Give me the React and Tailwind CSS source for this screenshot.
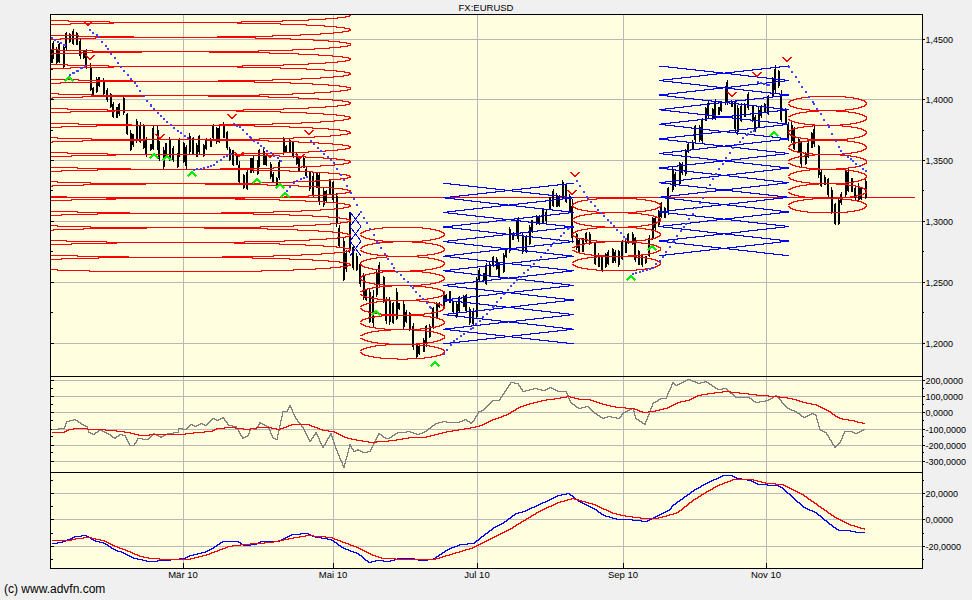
import React from 'react';

// [x, high, low] in page pixels, read off the chart
const BARS = [
  [51,49,63],[53,41,59],[56,47,65],[59,43,63],[63,44,68],[66,32,50],[69,33,43],[73,29,45],[76,32,45],[80,38,59],
  [83,50,59],[86,49,69],[90,63,91],[93,87,97],[96,77,93],[99,77,87],[103,78,95],[107,88,102],[110,93,108],[113,102,118],
  [116,107,118],[119,103,116],[123,95,115],[127,113,135],[130,130,151],[133,134,147],[136,119,143],[140,122,143],[143,124,149],[146,137,157],
  [150,144,151],[153,126,150],[157,126,150],[159,141,161],[163,147,169],[166,143,158],[169,137,161],[173,146,162],[177,153,168],[179,138,157],
  [183,142,163],[186,145,169],[189,133,154],[193,137,155],[196,143,157],[199,135,154],[203,144,157],[206,138,150],[210,138,147],[213,124,140],
  [216,127,144],[219,126,143],[223,122,138],[227,131,150],[229,147,161],[233,150,166],[236,153,165],[239,161,185],[243,174,189],[247,169,190],
  [250,158,173],[253,156,173],[257,160,175],[259,149,167],[263,149,165],[266,156,166],[270,162,179],[273,172,183],[276,177,187],[279,160,180],
  [283,137,155],[286,145,153],[289,138,153],[293,141,158],[296,152,165],[299,158,172],[303,157,168],[306,167,177],[309,171,191],[313,173,197],
  [316,172,188],[319,172,205],[323,188,207],[326,190,202],[329,179,195],[333,181,203],[336,193,227],[339,225,247],[343,238,281],[346,250,272],
  [349,212,253],[353,245,270],[356,253,271],[360,263,287],[363,273,300],[366,290,301],[369,289,323],[373,290,327],[376,270,297],[379,262,287],
  [383,276,303],[386,297,324],[389,297,325],[393,302,324],[396,288,320],[399,303,310],[403,301,330],[406,310,323],[409,312,331],[413,323,350],
  [416,343,358],[419,345,355],[423,338,352],[426,325,347],[429,324,338],[433,307,329],[436,302,318],[439,302,308],[443,292,308],[446,294,302],
  [449,291,303],[453,301,313],[456,302,318],[459,296,312],[463,295,307],[466,294,313],[469,307,325],[473,308,325],[476,277,318],[479,268,282],
  [483,273,282],[486,263,285],[489,262,277],[493,256,267],[496,257,270],[499,263,278],[503,253,273],[506,248,258],[509,227,253],[513,232,240],
  [516,220,235],[518,217,242],[522,233,254],[526,235,253],[529,225,245],[532,220,233],[536,215,225],[539,215,225],[542,208,223],[546,210,223],
  [549,197,210],[553,189,207],[556,193,207],[559,195,207],[562,180,200],[566,184,203],[569,194,213],[572,199,243],[576,233,250],[579,238,253],
  [582,238,252],[586,232,243],[589,232,245],[595,242,265],[598,253,267],[602,255,272],[605,253,268],[608,250,265],[612,248,263],[615,250,263],
  [618,250,267],[622,240,260],[625,240,253],[628,233,244],[632,232,245],[635,237,262],[638,250,265],[642,254,267],[645,256,264],[649,235,257],
  [652,217,240],[655,217,230],[658,210,227],[661,202,218],[664,207,218],[668,187,215],[672,167,192],[675,172,187],[679,162,185],[682,162,175],
  [685,149,176],[688,143,153],[692,140,150],[695,125,142],[699,125,142],[702,118,143],[705,107,121],[708,100,118],[712,108,120],[715,99,120],
  [718,107,115],[721,101,112],[725,86,105],[727,80,105],[731,100,107],[735,100,133],[737,105,135],[741,103,122],[744,103,117],[748,92,110],
  [752,105,122],[755,115,132],[758,107,128],[761,105,118],[764,103,113],[768,95,115],[772,77,98],[775,65,93],[778,70,88],[781,90,122],
  [785,108,125],[788,122,141],[791,122,143],[794,127,150],[798,137,152],[801,142,167],[805,152,165],[808,140,158],[811,132,148],[814,126,147],
  [818,145,178],[821,170,187],[824,175,185],[828,178,197],[831,187,214],[835,203,225],[838,198,225],[841,192,205],[845,168,198],[848,169,192],
  [851,178,192],[855,187,200],[858,183,202],[861,187,200],[865,179,199],
];

const DOT_RUNS = [
  [[51,37],[57,41],[60,42],[64,44]],
  [[69,74],[73,72],[77,70],[81,67],[84,65]],
  [[89,29],[98,36],[107,48],[120,66],[136,85],[150,105],[163,118],[177,130],[187,137]],
  [[193,169],[207,166],[213,164],[223,156],[230,153]],
  [[233,123],[239,126],[250,137],[263,147],[280,160]],
  [[286,190],[293,182],[300,178],[306,176]],
  [[310,140],[320,150],[333,162],[343,179],[353,198],[366,222],[377,242],[393,267],[412,287],[430,307]],
  [[443,353],[453,340],[472,327],[493,305],[513,282],[533,263],[553,242],[568,227]],
  [[576,180],[587,197],[600,212],[613,225],[625,238]],
  [[632,273],[652,267],[662,256],[673,240],[685,223],[702,197],[715,173],[732,147],[747,133],[753,130]],
  [[757,81],[763,83],[768,84]],
  [[788,66],[798,81],[813,103],[828,126],[840,150],[852,160],[865,170]],
];

const RED_V = [[88,23],[90,57],[160,136],[232,116],[239,154],[270,155],[300,156],[309,132],[575,174],[572,192],[732,94],[757,74],[787,59]];
const GREEN_UP = [[69,79],[154,156],[167,158],[192,174],[257,181],[280,186],[285,195],[376,313],[435,364],[631,278],[652,248],[774,134]];

// lines for the two lower panels, as [x, y] in page pixels
const CCI = [[52,429],[63,428],[66,421],[74,419],[80,423],[86,426],[88,432],[93,434],[99,429],[107,433],[114,438],[119,434],[124,435],[129,445],[133,445],[137,438],[147,439],[153,433],[160,437],[167,433],[177,432],[178,428],[185,429],[190,424],[195,426],[200,423],[205,425],[212,418],[217,420],[222,417],[228,425],[235,426],[242,438],[247,435],[250,428],[255,429],[259,422],[267,426],[272,437],[276,439],[282,411],[286,411],[289,405],[295,418],[302,427],[309,441],[315,432],[322,447],[330,433],[335,448],[343,467],[349,444],[353,451],[357,449],[363,452],[369,451],[378,433],[385,438],[388,438],[397,432],[403,432],[408,431],[417,434],[423,432],[435,423],[443,421],[448,422],[457,422],[465,419],[470,423],[473,420],[478,411],[482,410],[485,407],[490,402],[492,400],[498,400],[503,393],[510,382],[517,383],[522,391],[535,388],[543,390],[550,387],[558,391],[565,391],[570,402],[578,408],[587,406],[593,412],[602,418],[608,416],[618,418],[623,412],[632,408],[635,418],[644,424],[652,403],[660,398],[665,398],[672,382],[675,385],[688,379],[698,383],[705,381],[717,389],[725,388],[735,397],[748,397],[755,402],[767,400],[775,395],[787,408],[795,411],[803,417],[812,413],[815,415],[819,429],[825,432],[834,447],[839,442],[844,431],[850,431],[855,433],[865,428]];
const CCI_AVG = [[52,432],[63,432],[68,429],[77,428],[97,429],[112,430],[128,432],[140,435],[157,434],[180,434],[197,432],[210,431],[217,428],[230,427],[247,429],[258,427],[268,427],[278,429],[292,424],[307,424],[323,430],[333,431],[345,437],[353,439],[370,442],[393,440],[410,437],[423,437],[443,432],[460,429],[473,427],[480,425],[493,419],[507,414],[518,407],[530,403],[542,400],[557,398],[568,396],[580,399],[588,399],[603,404],[617,407],[632,408],[643,412],[652,411],[665,408],[677,402],[687,400],[697,395],[710,393],[725,391],[743,393],[760,395],[775,396],[790,398],[807,403],[815,404],[827,410],[837,417],[843,419],[852,420],[858,422],[865,423]];
const MACD = [[52,543],[60,542],[68,539],[75,536],[85,535],[95,541],[102,542],[115,550],[122,552],[133,558],[140,559],[148,561],[165,560],[183,558],[190,555],[203,552],[213,547],[222,541],[237,541],[243,545],[255,544],[260,541],[277,541],[292,534],[307,533],[312,536],[330,539],[343,548],[357,553],[368,562],[377,560],[388,561],[398,558],[412,558],[420,560],[432,559],[447,549],[460,544],[473,543],[480,537],[492,528],[503,522],[515,513],[523,511],[543,502],[558,495],[568,493],[578,501],[593,508],[603,515],[617,519],[627,519],[645,521],[668,510],[672,505],[693,490],[707,482],[723,475],[730,475],[737,478],[750,480],[757,484],[777,485],[782,488],[803,507],[815,512],[828,523],[838,530],[847,530],[857,532],[865,532]];
const MACD_AVG = [[52,540],[68,540],[77,538],[88,537],[102,540],[115,546],[128,551],[140,556],[150,558],[167,559],[187,559],[207,554],[228,546],[243,544],[270,542],[290,538],[307,535],[330,537],[343,542],[357,547],[370,554],[382,558],[408,559],[433,559],[450,554],[473,547],[490,538],[507,530],[520,522],[540,510],[558,502],[572,498],[593,504],[613,513],[627,516],[637,517],[643,518],[655,518],[667,515],[677,512],[692,500],[705,492],[717,485],[733,479],[750,479],[767,483],[782,484],[800,493],[813,502],[833,516],[848,524],[865,529]];

const VERTICALS = [183, 333, 477, 623, 766];
const DATES = [
  ['Mär 10', 'mr-[50px]'],
  ['Mai 10', 'mr-[44px]'],
  ['Jul 10', 'mr-[46px]'],
  ['Sep 10', 'mr-[43px]'],
  ['Nov 10', ''],
];

// square-stepped path through the points, one pixel column at a time
const steppedPath = (pts) => {
  const out = [];
  for (let i = 0; i < pts.length - 1; i++) {
    const [x0, y0] = pts[i];
    const [x1, y1] = pts[i + 1];
    for (let x = x0; x < x1; x++) {
      const y = Math.round(y0 + ((x - x0) / (x1 - x0)) * (y1 - y0)) + 0.5;
      out.push([x, y], [x + 1, y]);
    }
  }
  return 'M' + out.map((p) => p.join(' ')).join('L');
};

// stepped ellipse like the original's pixel plotting
const ellipsePath = (cx, cy, a, b, minX) => {
  const pts = [[], []];
  for (let x = Math.round(cx - a); x <= cx + a; x++) {
    if (x < minX) continue;
    const t = (x + 0.5 - cx) / a;
    const s = Math.sqrt(Math.max(0, 1 - t * t));
    pts[0].push([x, Math.round(cy - b * s) + 0.5], [x + 1, Math.round(cy - b * s) + 0.5]);
    pts[1].push([x, Math.round(cy + b * s) + 0.5], [x + 1, Math.round(cy + b * s) + 0.5]);
  }
  const all = [...pts[0], ...pts[1].reverse()];
  return 'M' + all.map((p) => p.join(' ')).join('L');
};

// bow-tie: two lines that meet at the row and spread to the row's neighbours
const bowPath = (cx, y, a, b) => {
  const line = (sign) => {
    const pts = [];
    for (let x = Math.round(cx - a); x <= cx + a; x++) {
      const v = Math.round(y + sign * b * (Math.abs(x + 0.5 - cx) / a)) + 0.5;
      pts.push([x, v], [x + 1, v]);
    }
    return 'M' + pts.map((p) => p.join(' ')).join('L');
  };
  return line(1) + line(-1);
};

// the little cross pattern is short enough for straight strokes
const crossPath = (cx, y, a, b) =>
  `M${cx - a} ${y - b}L${cx + a} ${y + b}M${cx - a} ${y + b}L${cx + a} ${y - b}`;

const range = (start, step, count) => Array.from({length: count}, (_, i) => start + step * i);

const ELLIPSES = [
  ...range(14.7, 14.67, 18).map((cy) => ellipsePath(175, cy, 175, 7.35, 51)),
  ...range(234, 14.65, 9).map((cy) => ellipsePath(402, cy, 42, 7.35, 51)),
  ...range(205, 14.5, 5).map((cy) => ellipsePath(616, cy, 44, 7.3, 51)),
  ...range(103, 14.6, 8).map((cy) => ellipsePath(827, cy, 39, 7.3, 51)),
];

const BOWS = [
  ...range(219.3, 14.6, 3).map((y) => crossPath(355.5, y, 5.5, 7.3)),
  ...range(190, 14.6, 11).map((y) => bowPath(508, y, 65, 7.3)),
  ...range(72.7, 14.6, 13).map((y) => bowPath(723.5, y, 65, 7.3)),
];

const dotsOf = (run) => {
  const out = [];
  for (let i = 0; i < run.length - 1; i++) {
    const [x0, y0] = run[i];
    const [x1, y1] = run[i + 1];
    for (let x = x0; x < x1; x += 3.4) {
      out.push([Math.round(x), Math.round(y0 + ((x - x0) / (x1 - x0)) * (y1 - y0))]);
    }
  }
  out.push(run[run.length - 1]);
  return out;
};

const Grid = ({top, bottom, rows, minor, majorLeft}) => (
  <g shapeRendering="crispEdges">
    {rows.map((y) => (
      <path key={y} d={`M51 ${y + 0.5}H922`} stroke="#b8b8b8" />
    ))}
    {VERTICALS.map((x) => (
      <path key={x} d={`M${x + 0.5} ${top}V${bottom}`} stroke="#b8b8b8" />
    ))}
    {minor.map((y) => (
      <path key={y} d={`M51 ${y + 0.5}h2M923 ${y + 0.5}h1`} stroke="#000" />
    ))}
    {majorLeft.map((y) => (
      <path key={y} d={`M51 ${y + 0.5}h3M922 ${y + 0.5}h3`} stroke="#000" />
    ))}
  </g>
);

const Labels = ({items}) => (
  <g className="text-[9px]" fill="#000">
    {items.map(([y, label]) => (
      <text key={label} x="925.5" y={y + 3.5}>{label}</text>
    ))}
  </g>
);

const PRICE_ROWS = [39, 99, 160, 221, 282, 343];
const CCI_ROWS = [380, 396, 412, 429, 445, 461];
const MACD_ROWS = [493, 519, 546];

export default function App() {
  return (
    <div className="w-[972px] h-[600px] overflow-hidden bg-[#f0f0f0] flex flex-col font-['Liberation_Sans',sans-serif] text-black">
      <div className="h-[14px] w-[972px] text-center text-[9.5px] leading-[15px]">FX:EURUSD</div>

      <div className="ml-[50px] w-[873px] h-[555px] border border-black bg-[#ffffe0] flex flex-col">
        <div className="h-[362px] border-b border-black">
          <svg width="871" height="361" viewBox="51 15 871 361" className="overflow-visible">
            <defs>
              <clipPath id="plot">
                <rect x="51" y="15" width="871" height="361" />
              </clipPath>
            </defs>
            <Grid top={15} bottom={376} rows={PRICE_ROWS} minor={[69, 130, 190, 251, 312]} majorLeft={PRICE_ROWS} />
            <path d="M51 197.5H915" stroke="#ff0000" shapeRendering="crispEdges" />
            <g shapeRendering="crispEdges" fill="#000">
              {BARS.map(([x, hi, lo], i) => {
                const bodyTop = hi + Math.round((lo - hi) * (0.03 + ((i * 7) % 5) * 0.03));
                const bodyBottom = lo - Math.round((lo - hi) * (0.03 + ((i * 3) % 4) * 0.03));
                return (
                  <g key={x}>
                    <rect x={x} y={hi} width="1" height={lo - hi} />
                    <rect x={x + (i % 2 ? -1 : 0)} y={bodyTop} width="2" height={bodyBottom - bodyTop} />
                  </g>
                );
              })}
            </g>
            <g clipPath="url(#plot)" fill="none" stroke="#ff0000" shapeRendering="crispEdges">
              {ELLIPSES.map((d, i) => (
                <path key={i} d={d} />
              ))}
            </g>
            <g fill="none" stroke="#0000ff" shapeRendering="crispEdges">
              {BOWS.map((d, i) => (
                <path key={i} d={d} />
              ))}
            </g>
            <g fill="#4040ff" shapeRendering="crispEdges">
              {DOT_RUNS.flatMap(dotsOf).map(([x, y], i) => (
                <rect key={i} x={x} y={y} width="2" height="2" />
              ))}
            </g>
            <g fill="none" strokeWidth="1.5" shapeRendering="crispEdges">
              {RED_V.map(([x, y]) => (
                <path key={`${x}-${y}`} d={`M${x - 4.5} ${y - 2}L${x} ${y + 2.5}L${x + 4.5} ${y - 2}`} stroke="#ff0000" />
              ))}
              {GREEN_UP.map(([x, y]) => (
                <path key={`${x}-${y}`} d={`M${x - 4.5} ${y + 2.5}L${x} ${y - 2}L${x + 4.5} ${y + 2.5}`} stroke="#00ee00" />
              ))}
            </g>
            <Labels items={[[39, '1,4500'], [99, '1,4000'], [160, '1,3500'], [221, '1,3000'], [282, '1,2500'], [343, '1,2000']]} />
          </svg>
        </div>

        <div className="h-[96px] border-b border-black">
          <svg width="871" height="95" viewBox="51 377 871 95" className="overflow-visible">
            <Grid top={377} bottom={472} rows={CCI_ROWS} minor={range(388, 16, 5)} majorLeft={CCI_ROWS} />
            <g fill="none" shapeRendering="crispEdges">
              <path d={steppedPath(CCI)} stroke="#808080" />
              <path d={steppedPath(CCI_AVG)} stroke="#ff0000" />
            </g>
            <Labels items={[[380, '200,0000'], [396, '100,0000'], [412, '0,0000'], [429, '-100,0000'], [445, '-200,0000'], [461, '-300,0000']]} />
          </svg>
        </div>

        <div className="h-[95px]">
          <svg width="871" height="95" viewBox="51 473 871 95" className="overflow-visible">
            <Grid top={473} bottom={568} rows={MACD_ROWS} minor={[480, 506, 533, 559]} majorLeft={MACD_ROWS} />
            <path d={VERTICALS.map((x) => `M${x + 0.5} 563V568`).join('')} stroke="#000" shapeRendering="crispEdges" />
            <g fill="none" shapeRendering="crispEdges">
              <path d={steppedPath(MACD)} stroke="#0000ff" />
              <path d={steppedPath(MACD_AVG)} stroke="#ff0000" />
            </g>
            <Labels items={[[493, '20,0000'], [519, '0,0000'], [546, '-20,0000']]} />
          </svg>
        </div>
      </div>

      <div className="flex pl-[133px] h-[14px] text-[9.5px] leading-[12px]">
        {DATES.map(([label, gap]) => (
          <div key={label} className={`w-[100px] text-center ${gap}`}>{label}</div>
        ))}
      </div>
      <div className="pl-[4px] text-[12px] leading-[13px]">(c) www.advfn.com</div>
    </div>
  );
}
